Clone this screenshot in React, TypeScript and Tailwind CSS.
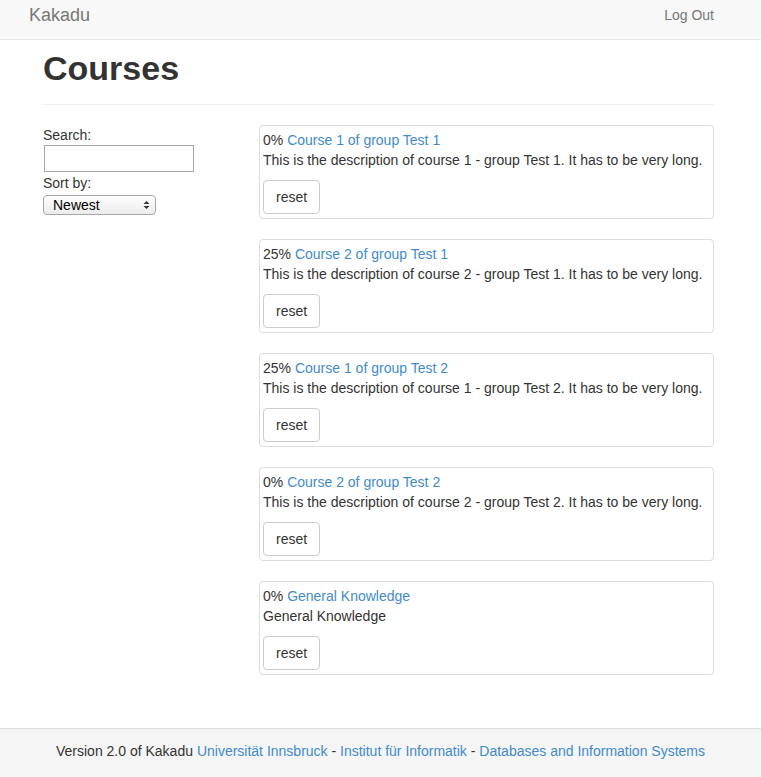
const courses = [
  {
    pct: "0%",
    title: "Course 1 of group Test 1",
    desc: "This is the description of course 1 - group Test 1. It has to be very long.",
  },
  {
    pct: "25%",
    title: "Course 2 of group Test 1",
    desc: "This is the description of course 2 - group Test 1. It has to be very long.",
  },
  {
    pct: "25%",
    title: "Course 1 of group Test 2",
    desc: "This is the description of course 1 - group Test 2. It has to be very long.",
  },
  {
    pct: "0%",
    title: "Course 2 of group Test 2",
    desc: "This is the description of course 2 - group Test 2. It has to be very long.",
  },
  {
    pct: "0%",
    title: "General Knowledge",
    desc: "General Knowledge",
  },
];

function CourseCard({ pct, title, desc }: { pct: string; title: string; desc: string }) {
  return (
    <div className="border border-[#ddd] rounded-[4px] px-[3px] pt-[4px] pb-[4px]">
      <div className="leading-[20px]">
        {pct} <a href="#" className="text-[#428bca]">{title}</a>
      </div>
      <div className="leading-[20px]">{desc}</div>
      <button className="mt-[10px] h-[34px] px-[12px] border border-[#ccc] rounded-[4px] bg-white text-[#333] text-[14px] leading-[20px]">
        reset
      </button>
    </div>
  );
}

export default function App() {
  return (
    <div className="min-h-[777px] flex flex-col bg-white text-[#333] text-[14px] font-['Liberation_Sans',Arial,sans-serif]">
      <nav className="h-[40px] bg-[#f8f8f8] border-b border-[#e7e7e7] flex items-start justify-between pl-[29px] pr-[47px]">
        <a href="#" className="text-[18px] text-[#777] leading-[20px] mt-[5px]">Kakadu</a>
        <a href="#" className="text-[14px] text-[#777] leading-[20px] mt-[5px]">Log Out</a>
      </nav>

      <main className="flex-1 pl-[43px] pr-[47px]">
        <div className="border-b border-[#eee] pb-[16px] pt-[8px] mb-[20px]">
          <h1 className="text-[34px] font-bold leading-[40px] text-[#333]">Courses</h1>
        </div>

        <div className="flex">
          <div className="w-[216px] shrink-0">
            <label className="block leading-[20px]">Search:</label>
            <input
              type="text"
              className="block ml-[1px] w-[150px] h-[27px] border border-[#a9a9a9] bg-white"
            />
            <label className="block leading-[20px] mt-[1px]">Sort by:</label>
            <div className="mt-[2px] w-[113px] h-[20px] rounded-[4px] border border-[#a6a6a6] bg-gradient-to-b from-white to-[#ececec] flex items-center justify-between pl-[9px] pr-[5px] text-[14px] text-black">
              <span>Newest</span>
              <svg width="7" height="10" viewBox="0 0 7 10">
                <path d="M0.5 4 L3.5 1 L6.5 4 Z" fill="#333" />
                <path d="M0.5 6 L3.5 9 L6.5 6 Z" fill="#333" />
              </svg>
            </div>
          </div>

          <div className="flex-1 flex flex-col gap-[20px]">
            {courses.map((c) => (
              <CourseCard key={c.title} {...c} />
            ))}
          </div>
        </div>
      </main>

      <footer className="mt-[49px] h-[49px] bg-[#f5f5f5] border-t border-[#ddd] flex items-start justify-center pt-[12px]">
        <p className="leading-[20px]">
          Version 2.0 of Kakadu{" "}
          <a href="#" className="text-[#428bca]">Universität Innsbruck</a> -{" "}
          <a href="#" className="text-[#428bca]">Institut für Informatik</a> -{" "}
          <a href="#" className="text-[#428bca]">Databases and Information Systems</a>
        </p>
      </footer>
    </div>
  );
}
